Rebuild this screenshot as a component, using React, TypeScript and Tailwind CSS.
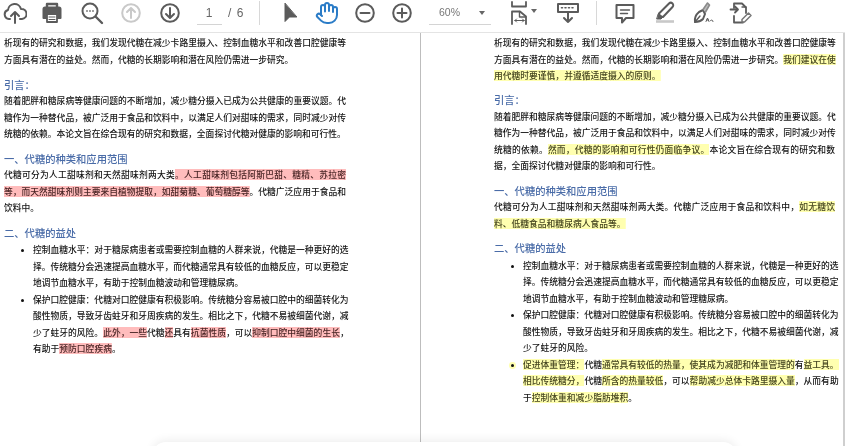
import React from "react";
import { Hand } from "lucide-react";

const G = "#5b5b5b";
const Ico = ({ ml, w = 24, children }: { ml: string; w?: number; children: React.ReactNode }) => (
  <svg viewBox="0 0 24 24" width={w} height={24} className={`shrink-0 ${ml}`} fill="none" stroke={G} strokeWidth="2" strokeLinecap="round" strokeLinejoin="round">
    {children}
  </svg>
);

const Toolbar = () => (
  <div className="flex items-center h-[33px] pb-[6px] bg-white border-b border-[#e4e4e4] text-[#666] shrink-0 relative">
    <Ico ml="ml-[3px]">
      <path d="M7 18H6a4.6 4.6 0 0 1-1-9 6.6 6.6 0 0 1 13-1 5 5 0 0 1 1 10h-2" />
      <path d="M12 22V11M8 15l4-4 4 4" />
    </Ico>
    <Ico ml="ml-[13px]">
      <path d="M7 7V3h10v4" fill="none" strokeWidth="2.4" />
      <path d="M3.5 8a1.5 1.5 0 0 1 1.5-1.500h14A1.500 1.500 0 0 1 20.500 8v9H3.500z" fill={G} stroke={G} />
      <rect x="7" y="13" width="10" height="8" fill="#fff" stroke={G} strokeWidth="1.800" />
      <path d="M9 16h6M9 18.500h6" strokeWidth="1" />
    </Ico>
    <Ico ml="ml-[16px]">
      <circle cx="10" cy="10" r="7.500" />
      <path d="M16 16l6 6" strokeWidth="2.400" />
      <path d="M6.800 10h.4M9.800 10h.4M12.800 10h.4" strokeWidth="1.600" />
    </Ico>
    <Ico ml="ml-[15px]">
      <g stroke="#c9c9c9">
        <circle cx="12" cy="12" r="8.800" />
        <path d="M12 17V7.500M8 11l4-4 4 4" />
      </g>
    </Ico>
    <Ico ml="ml-[15px]">
      <circle cx="12" cy="12" r="8.800" />
      <path d="M12 7v9.500M8 13l4 4 4-4" />
    </Ico>
    <div className="ml-[15px] w-[25px] h-[24px] border-b border-[#d4d4d4] flex items-center justify-center pr-[1px] text-[12px] font-['Liberation_Sans',sans-serif]">1</div>
    <div className="ml-[6px] w-[20px] text-[12px] tracking-[1px] font-['Liberation_Sans',sans-serif] whitespace-pre">/ 6</div>
    <div className="ml-[11px] w-px h-[24px] bg-[#d8d8d8]" />
    <Ico ml="ml-[17px]">
      <path d="M8 2.500v18l4.500-4.500h7z" fill={G} stroke={G} strokeWidth="1" />
    </Ico>
    <Hand size={24} strokeWidth={2} color="#2b7cc7" className="ml-[14px] shrink-0" />
    <Ico ml="ml-[14px]">
      <circle cx="12" cy="12" r="8.800" />
      <path d="M7.500 12h9" />
    </Ico>
    <Ico ml="ml-[13px]">
      <circle cx="12" cy="12" r="8.800" />
      <path d="M7.500 12h9M12 7.500v9" />
    </Ico>
    <div className="ml-[15px] w-[62px] h-[24px] border-b border-[#d4d4d4] flex items-center pl-[10px] text-[10.500px] text-[#777] font-['Liberation_Sans',sans-serif] relative">
      60%
      <span className="absolute left-[50px] top-[10px] w-0 h-0 border-x-[3px] border-x-transparent border-t-[4px] border-t-[#666]" />
    </div>
    <Ico ml="ml-[17px]">
      <path d="M2 1v4.500h14V1M2 23V10.500h8l6 5V23" strokeWidth="1.800" transform="translate(2 0)" />
      <path d="M11.500 10.500V16h6" strokeWidth="1.400" />
      <path d="M7 19.500h9M7 19.500l1.500-1.500M7 19.500L8.500 21M16 19.500L14.500 18M16 19.500L14.500 21" strokeWidth="1" />
    </Ico>
    <span className="ml-[-1px] mb-[4px] w-0 h-0 border-x-[3px] border-x-transparent border-t-[4px] border-t-[#666]" />
    <Ico ml="ml-[19px]">
      <path d="M2 3h20v8H2z" strokeWidth="2" />
      <path d="M5.500 6.800h1M9 6.800h1M12.500 6.800h1M16 6.800h1" strokeWidth="1.600" />
      <path d="M12 11v10M8 17l4 4 4-4" />
    </Ico>
    <div className="ml-[16px] w-px h-[24px] bg-[#d8d8d8]" />
    <Ico ml="ml-[16px]">
      <path d="M3.500 4h17v13H13l-4 4.500V17H3.500z" />
      <path d="M7.500 9h9M7.500 12.500h7" strokeWidth="1.400" />
    </Ico>
    <Ico ml="ml-[15px]">
      <path d="M8 15.500l-1-3L17 2.500a2 2 0 0 1 3.500 3.500L11 16z" fill="#fff" />
      <path d="M6.500 13l4.500 3-2 2H5z" fill={G} stroke={G} strokeWidth="1" />
      <path d="M4 20.500h18" stroke="#c8c8c8" strokeWidth="2.600" strokeLinecap="butt" />
    </Ico>
    <Ico ml="ml-[15px]">
      <path d="M4 21c-.5-3 .5-7 4-10l4-2 2 4-2 5c-2 2-5 3-8 3z" />
      <path d="M4 21l5-6" strokeWidth="1.400" />
      <path d="M12 8.500L16.500 2l2 2-4 7" strokeWidth="1.600" fill="#bdbdbd" stroke="#8a8a8a" />
      <path d="M15 20.500l1.500-3.500 1.500 3.500M19.500 19.500c1-1 2.500-.5 2.500 1M15.500 19h2" strokeWidth="1" />
    </Ico>
    <Ico ml="ml-[14px]">
      <path d="M5 7V2.500h8l4 4V12" strokeWidth="1.800" />
      <path d="M1.500 8.500h7M6 5.500l3 3-3 3" strokeWidth="1.800" />
      <path d="M5 15v6.500h9" strokeWidth="1.800" />
      <path d="M13 6h4" strokeWidth="1.400" />
      <path d="M13 18.500l6.500-6.500 2.500 2.500-6.500 6.500H13z" strokeWidth="1.500" stroke="#777" />
    </Ico>
  </div>
);

const R = ({ children }: { children: React.ReactNode }) => (
  <span className="text-[#4a2626] bg-no-repeat bg-center bg-[length:100%_11px] bg-[linear-gradient(#ffbcbc,#ffbcbc)]">{children}</span>
);
const Y = ({ children }: { children: React.ReactNode }) => (
  <span className="text-[#45451f] bg-no-repeat bg-center bg-[length:100%_11px] bg-[linear-gradient(#ffffb0,#ffffb0)]">{children}</span>
);

const L = ({ children, last = false, cls = "" }: { children: React.ReactNode; last?: boolean; cls?: string }) => (
  <div className={`h-[16.500px] leading-[16.500px] whitespace-nowrap overflow-visible ${last ? "" : "text-justify [text-align-last:justify] whitespace-normal"} ${cls}`}>
    {children}
  </div>
);

const H = ({ children, cls }: { children: React.ReactNode; cls: string }) => (
  <div className={`h-[16.500px] leading-[16.500px] text-[10.300px] text-[#4a6ca8] ${cls}`}>{children}</div>
);

const Bullet = ({ children, yellow = false }: { children: React.ReactNode; yellow?: boolean }) => (
  <div className="flex">
    <div className="w-[29px] shrink-0 relative">
      <span className={`absolute left-[17px] top-[7px] w-[3px] h-[3px] rounded-full bg-[#111] ${yellow ? "shadow-[0_0_0_2px_#ffffb0]" : ""}`} />
    </div>
    <div className="flex-1 min-w-0">{children}</div>
  </div>
);

const Page = ({ children, cls }: { children: React.ReactNode; cls: string }) => (
  <div className={`pt-[2px] font-medium text-[8.770px] text-[#141414] font-['Noto_Sans_CJK_SC','Noto_Sans_CJK_TC',sans-serif] ${cls}`}>{children}</div>
);

export default function App() {
  return (
    <div className="w-[845px] h-[446px] overflow-hidden bg-white relative flex flex-col blur-[0.3px]">
      <Toolbar />
      <div className="flex flex-1 min-h-0">
        <Page cls="w-[421px] shrink-0 border-r border-[#bdbdbd] pl-[4px] pr-[74px]">
          <L>析现有的研究和数据，我们发现代糖在减少卡路里摄入、控制血糖水平和改善口腔健康等</L>
          <L last>方面具有潜在的益处。然而，代糖的长期影响和潜在风险仍需进一步研究。</L>
          <H cls="mt-[8.500px]">引言：</H>
          <L>随着肥胖和糖尿病等健康问题的不断增加，减少糖分摄入已成为公共健康的重要议题。代</L>
          <L>糖作为一种替代品，被广泛用于食品和饮料中，以满足人们对甜味的需求，同时减少对传</L>
          <L last>统糖的依赖。本论文旨在综合现有的研究和数据，全面探讨代糖对健康的影响和可行性。</L>
          <H cls="mt-[8px]">一、代糖的种类和应用范围</H>
          <L>代糖可分为人工甜味剂和天然甜味剂两大类<R>。人工甜味剂包括阿斯巴甜、糖精、苏拉密</R></L>
          <L><R>等，而天然甜味剂则主要来自植物提取，如甜菊糖、葡萄糖醇等</R>。代糖广泛应用于食品和</L>
          <L last>饮料中。</L>
          <H cls="mt-[8px]">二、代糖的益处</H>
          <div className="mt-[1px]">
            <Bullet>
              <L>控制血糖水平：对于糖尿病患者或需要控制血糖的人群来说，代糖是一种更好的选</L>
              <L>择。传统糖分会迅速提高血糖水平，而代糖通常具有较低的血糖反应，可以更稳定</L>
              <L last>地调节血糖水平，有助于控制血糖波动和管理糖尿病。</L>
            </Bullet>
            <Bullet>
              <L>保护口腔健康：代糖对口腔健康有积极影响。传统糖分容易被口腔中的细菌转化为</L>
              <L>酸性物质，导致牙齿蛀牙和牙周疾病的发生。相比之下，代糖不易被细菌代谢，减</L>
              <L>少了蛀牙的风险。<R>此外，一些</R>代糖<R>还</R>具有<R>抗菌性质</R>，可以<R>抑制口腔中细菌的生长</R>，</L>
              <L last>有助于<R>预防口腔疾病</R>。</L>
            </Bullet>
          </div>
        </Page>
        <Page cls="flex-1 min-w-0 pl-[73px] pr-[8px]">
          <L>析现有的研究和数据，我们发现代糖在减少卡路里摄入、控制血糖水平和改善口腔健康等</L>
          <L>方面具有潜在的益处。然而，代糖的长期影响和潜在风险仍需进一步研究。<Y>我们建议在使</Y></L>
          <L last><Y>用代糖时要谨慎，并遵循适度摄入的原则。</Y></L>
          <H cls="mt-[7.500px]">引言：</H>
          <L>随着肥胖和糖尿病等健康问题的不断增加，减少糖分摄入已成为公共健康的重要议题。代</L>
          <L>糖作为一种替代品，被广泛用于食品和饮料中，以满足人们对甜味的需求，同时减少对传</L>
          <L>统糖的依赖。<Y>然而，代糖的影响和可行性仍面临争议。</Y>本论文旨在综合现有的研究和数</L>
          <L last>据，全面探讨代糖对健康的影响和可行性。</L>
          <H cls="mt-[8px]">一、代糖的种类和应用范围</H>
          <L>代糖可分为人工甜味剂和天然甜味剂两大类。代糖广泛应用于食品和饮料中，<Y>如无糖饮</Y></L>
          <L last><Y>料、低糖食品和糖尿病人食品等。</Y></L>
          <H cls="mt-[8px]">二、代糖的益处</H>
          <div className="mt-[1px]">
            <Bullet>
              <L>控制血糖水平：对于糖尿病患者或需要控制血糖的人群来说，代糖是一种更好的选</L>
              <L>择。传统糖分会迅速提高血糖水平，而代糖通常具有较低的血糖反应，可以更稳定</L>
              <L last>地调节血糖水平，有助于控制血糖波动和管理糖尿病。</L>
            </Bullet>
            <Bullet>
              <L>保护口腔健康：代糖对口腔健康有积极影响。传统糖分容易被口腔中的细菌转化为</L>
              <L>酸性物质，导致牙齿蛀牙和牙周疾病的发生。相比之下，代糖不易被细菌代谢，减</L>
              <L last>少了蛀牙的风险。</L>
            </Bullet>
            <Bullet yellow>
              <L><Y>促进体重管理：</Y>代糖<Y>通常具有较低的热量，使其成为减肥和体重管理的</Y>有<Y>益工具。</Y></L>
              <L><Y>相比传统糖分，</Y>代糖<Y>所含的热量较低</Y>，可以<Y>帮助减少总体卡路里摄入量</Y>，从而有助</L>
              <L last>于<Y>控制体重和减少脂肪堆积</Y>。</L>
            </Bullet>
          </div>
        </Page>
        <div className="w-[2px] shrink-0 bg-[#cfcfcf]" />
      </div>
      <div className="absolute left-[152px] top-[442px] w-[585px] h-[20px] bg-white rounded-t-[14px] shadow-[0_-2px_10px_rgba(0,0,0,0.07)]" />
    </div>
  );
}
